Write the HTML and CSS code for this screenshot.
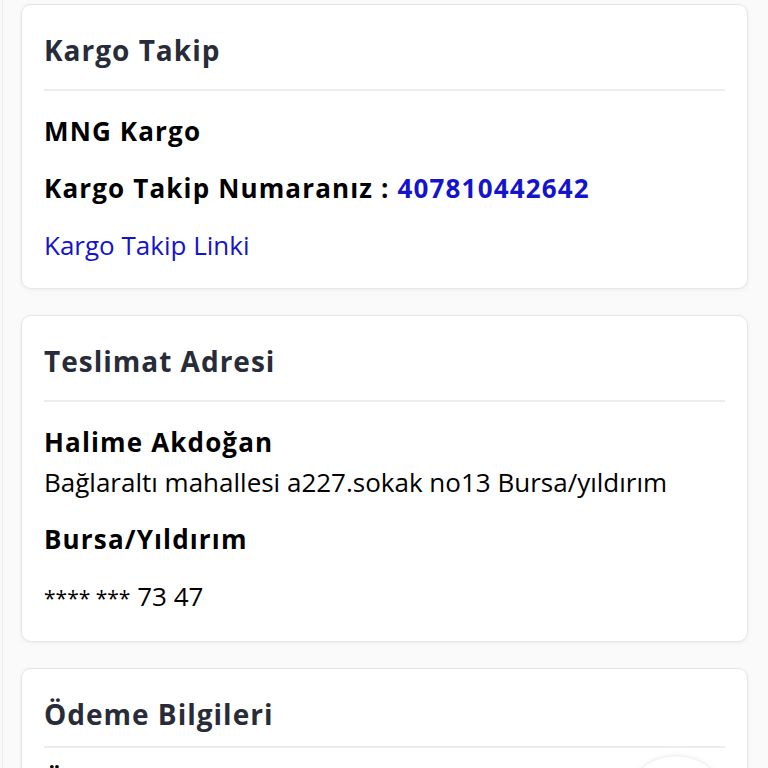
FILE: index.html
```html
<!DOCTYPE html>
<html lang="tr">
<head>
    <meta charset="UTF-8">
    <meta name="viewport" content="width=device-width, initial-scale=1.0">
    <title>Sipariş Detayı</title>
    <link rel="stylesheet" href="styles.css">
</head>
<body>
    <main class="page">
        <section class="card">
            <h2 class="card-title">Kargo Takip</h2>
            <div class="card-body">
                <p class="line strong">MNG Kargo</p>
                <p class="line strong">Kargo Takip Numaranız : <span class="track-no">407810442642</span></p>
                <p class="line"><a href="#" class="link">Kargo Takip Linki</a></p>
            </div>
        </section>

        <section class="card">
            <h2 class="card-title">Teslimat Adresi</h2>
            <div class="card-body">
                <p class="line strong">Halime Akdoğan</p>
                <p class="line address">Bağlaraltı mahallesi a227.sokak no13 Bursa/yıldırım</p>
                <p class="line strong">Bursa/Yıldırım</p>
                <p class="line"><span class="mask">**** ***</span> 73 47</p>
            </div>
        </section>

        <section class="card card-payment">
            <h2 class="card-title">Ödeme Bilgileri</h2>
            <div class="card-body">
                <p class="line strong">Ödeme Yöntemi</p>
                <p class="line">Kredi Kartı</p>
            </div>
        </section>
    </main>

    <div class="float-btn"></div>
</body>
</html>
```

FILE: styles.css
```css
body {
    font-family: 'Open Sans', 'Noto Sans', sans-serif;
    margin: 0;
    padding: 0;
    background: #fafafa;
    color: #000;
    overflow: hidden;
}
.page {
    margin-left: 2px;
    border-left: 1px solid #ececec;
    padding: 4px 20px 40px 18px;
    min-height: 100vh;
}
.card {
    background: #fff;
    border: 1px solid #e6e6e6;
    border-radius: 10px;
    box-shadow: 0 1px 4px rgba(0, 0, 0, 0.06);
    padding: 0 22px 26px;
    margin-bottom: 26px;
}
.card-title {
    margin: 0;
    padding: 27px 0 21px;
    font-size: 28px;
    line-height: 36px;
    font-weight: 700;
    letter-spacing: 1px;
    color: #272c38;
    border-bottom: 2px solid #ededed;
}
.card-body {
    padding-top: 23px;
}
.line {
    margin: 0 0 23px;
    font-size: 26px;
    line-height: 34px;
}
.line:last-child {
    margin-bottom: 0;
}
.strong {
    font-weight: 700;
    letter-spacing: 1.15px;
}
.address {
    margin-top: -17px;
}
.mask {
    font-size: 21px;
}
.track-no {
    color: #1414cc;
}
.link {
    color: #1414cc;
    text-decoration: none;
}

/* third card sits tighter */
.card-payment .card-title {
    padding-bottom: 14px;
}
.card-payment .card-body {
    padding-top: 15px;
}

.float-btn {
    position: absolute;
    left: 622px;
    top: 755px;
    width: 106px;
    height: 106px;
    border-radius: 50%;
    background: #fff;
    border: 1px solid #eeeeee;
    box-shadow: 0 0 6px rgba(0, 0, 0, 0.05);
}
```
